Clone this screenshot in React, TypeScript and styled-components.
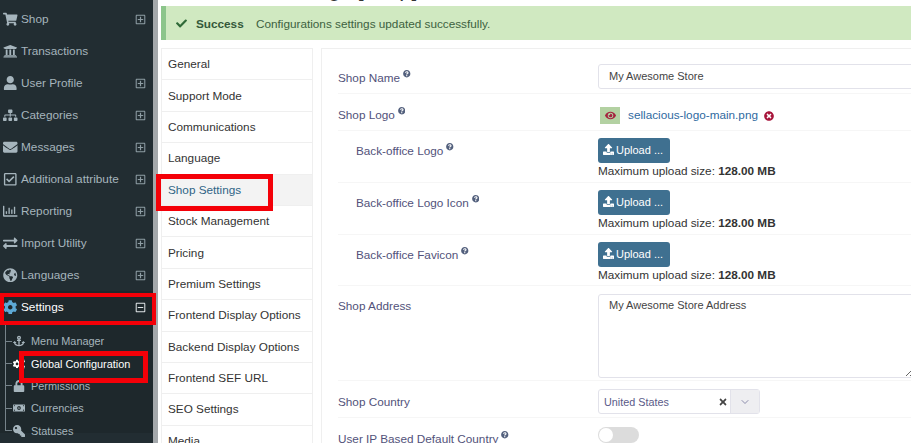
import styled, { createGlobalStyle } from 'styled-components';
import type { ComponentType, ReactNode } from 'react';
import { ChevronDown } from 'lucide-react';
import {
  FaAnchor,
  FaCheck,
  FaCog,
  FaCogs,
  FaEnvelope,
  FaExchangeAlt,
  FaEye,
  FaGlobeAmericas,
  FaKey,
  FaLock,
  FaMoneyBillAlt,
  FaQuestionCircle,
  FaRegChartBar,
  FaRegCheckSquare,
  FaRegMinusSquare,
  FaRegPlusSquare,
  FaShoppingCart,
  FaSitemap,
  FaTimes,
  FaTimesCircle,
  FaUniversity,
  FaUpload,
  FaUser,
} from 'react-icons/fa';

const Global = createGlobalStyle`
  html, body {
    margin: 0;
    height: 100%;
    overflow: hidden;
    background: #fff;
  }
  body {
    font-family: 'Liberation Sans', Arial, sans-serif;
    font-size: 11.75px;
    color: #333;
  }
`;

const Page = styled.div`
  display: flex;
  width: 911px;
  height: 443px;
  overflow: hidden;
  position: relative;
`;

const Sidebar = styled.nav`
  flex: 0 0 153px;
  height: 440px;
  background: #222d32;
  overflow: hidden;
  padding-top: 3px;
  border-right: 5px solid #a4a8ab;
`;

const NavItem = styled.div<{ $open?: boolean }>`
  display: flex;
  align-items: center;
  height: 32px;
  padding-left: 2px;
  color: ${p => (p.$open ? '#fff' : '#a6b5bd')};
  font-size: 11.8px;
  background: ${p => (p.$open ? '#1e282c' : 'transparent')};
`;

const NavIcon = styled.span<{ $accent?: boolean }>`
  flex: 0 0 19px;
  display: flex;
  justify-content: center;
  margin-left: -1px;
  margin-right: 1px;
  font-size: 14.5px;
  color: ${p => (p.$accent ? '#5da9d6' : '#a6b5bd')};
`;

const NavLabel = styled.span`
  flex: 1;
`;

const Toggle = styled.span<{ $open?: boolean }>`
  display: flex;
  margin-right: 7px;
  font-size: 11px;
  color: ${p => (p.$open ? '#dfe4e6' : '#8f9ea5')};
`;

const SubList = styled.div`
  position: relative;
  box-sizing: border-box;
  height: 110px;
  padding: 7px 0 0 5px;
  background: #1e282c;
  &::before {
    content: '';
    position: absolute;
    left: 5px;
    top: 0;
    bottom: 2px;
    width: 1px;
    background: #76838a;
  }
`;

const SubItem = styled.div<{ $active?: boolean }>`
  display: flex;
  align-items: center;
  height: 22.4px;
  font-size: 10.9px;
  color: ${p => (p.$active ? '#fff' : '#a6b5bd')};
  &::before {
    content: '';
    flex: 0 0 7px;
    height: 1px;
    background: #76838a;
  }
`;

const SubIcon = styled.span<{ $active?: boolean; $flip?: boolean }>`
  flex: 0 0 14px;
  display: flex;
  justify-content: center;
  margin-right: 5px;
  font-size: 12px;
  color: ${p => (p.$active ? '#fff' : '#a6b5bd')};
  transform: ${p => (p.$flip ? 'scaleX(-1)' : 'none')};
`;

const Content = styled.main`
  flex: 1;
  min-width: 0;
  padding-left: 3px;
`;

const PageTitle = styled.h1`
  margin: -23px 0 0;
  height: 29px;
  padding-left: 111px;
  font-size: 22px;
  font-weight: 400;
  line-height: 24px;
  color: #333;
  white-space: nowrap;
`;

const Alert = styled.div`
  display: flex;
  align-items: center;
  height: 34px;
  padding-left: 10px;
  background: #d0e9c1;
  border-left: 5px solid #8cc58b;
  color: #3c6140;
  box-sizing: border-box;
`;

const AlertIcon = styled.span`
  display: flex;
  width: 20px;
  font-size: 11px;
  color: #2f6a38;
`;

const AlertTitle = styled.strong`
  width: 60px;
  color: #34583a;
`;

const Columns = styled.div`
  display: flex;
  align-items: flex-start;
  margin-top: 8px;
  gap: 8px;
`;

const Tabs = styled.div`
  flex: 0 0 150px;
  border: 1px solid #efefef;
  border-bottom: 0;
`;

const Tab = styled.div<{ $active?: boolean }>`
  display: flex;
  align-items: center;
  height: 29.4px;
  padding: 0 0 1px 6px;
  border-bottom: 1px solid #efefef;
  white-space: nowrap;
  color: ${p => (p.$active ? '#2f6486' : '#333')};
  background: ${p => (p.$active ? '#f3f3f3' : '#fff')};
`;

const Panel = styled.section`
  flex: 1;
  min-width: 0;
  height: 400px;
  border: 1px solid #efefef;
  border-right: 0;
  padding-left: 16px;
`;

const Row = styled.div<{ $h: number }>`
  display: flex;
  height: ${p => p.$h}px;
  box-sizing: border-box;
  border-bottom: 1px solid #f6f6f6;
`;

const Label = styled.div<{ $nested?: boolean; $top: number }>`
  flex: 0 0 ${p => (p.$nested ? 242 : 260)}px;
  padding-left: ${p => (p.$nested ? 18 : 0)}px;
  padding-top: ${p => p.$top}px;
  color: #52527a;
  white-space: nowrap;
`;

const Help = styled.span`
  display: inline-flex;
  margin-left: 3px;
  vertical-align: 4px;
  font-size: 7.5px;
  color: #53607d;
`;

const Field = styled.div<{ $top: number }>`
  flex: 1;
  min-width: 0;
  padding-top: ${p => p.$top}px;
`;

const TextInput = styled.input`
  display: block;
  width: 330px;
  height: 25px;
  box-sizing: border-box;
  padding: 0 10px 2px;
  border: 1px solid #e2e2ea;
  border-radius: 3px;
  outline: none;
  font: 11px 'Liberation Sans', Arial, sans-serif;
  color: #444;
`;

const Logo = styled.div`
  display: flex;
  align-items: center;
  padding-left: 2px;
`;

const Thumb = styled.span`
  display: flex;
  align-items: center;
  justify-content: center;
  width: 20px;
  height: 17px;
  margin-right: 8px;
  background: #b3d1a2;
  color: #a5223f;
  font-size: 11px;
`;

const FileName = styled.a`
  padding-bottom: 2px;
  color: #2f6a9f;
`;

const Remove = styled.span`
  display: flex;
  margin-left: 6px;
  font-size: 10px;
  color: #a8163c;
`;

const UploadButton = styled.button`
  display: flex;
  align-items: center;
  gap: 2px;
  width: 72px;
  height: 25px;
  padding: 0 0 2px 5px;
  border: 0;
  border-radius: 3px;
  background: #3f7090;
  color: #fff;
  font: 400 11px 'Liberation Sans', Arial, sans-serif;
`;

const UploadHint = styled.div`
  margin-top: 1px;
  line-height: 14px;
  color: #333;
`;

const TextArea = styled.textarea`
  display: block;
  width: 317px;
  height: 84px;
  box-sizing: border-box;
  padding: 4px 10px;
  border: 1px solid #e2e2ea;
  border-radius: 3px;
  outline: none;
  resize: vertical;
  font: 11px 'Liberation Sans', Arial, sans-serif;
  color: #444;
`;

const SelectBox = styled.div`
  display: flex;
  align-items: center;
  width: 162px;
  height: 25px;
  box-sizing: border-box;
  border: 1px solid #e2e2ea;
  border-radius: 3px;
`;

const SelectValue = styled.span`
  flex: 1;
  padding-left: 5px;
  font-size: 10.8px;
  color: #5a5a88;
`;

const Clear = styled.span`
  display: flex;
  margin-right: 2px;
  font-size: 10px;
  color: #444;
`;

const Caret = styled.span`
  display: flex;
  align-items: center;
  justify-content: center;
  width: 28px;
  height: 100%;
  background: #eeeef1;
  border-left: 1px solid #e2e2ea;
  color: #6c6c94;
`;

const Switch = styled.span`
  display: flex;
  align-items: center;
  width: 41px;
  height: 16px;
  border-radius: 8px;
  background: #dcdcdc;
  &::before {
    content: '';
    width: 14px;
    height: 14px;
    margin-left: 1px;
    border-radius: 50%;
    background: #fff;
  }
`;

// red annotation boxes drawn over the screenshot
const Mark = styled.div<{ $x: number; $y: number; $w: number; $h: number; $t: number }>`
  position: absolute;
  left: ${p => p.$x}px;
  top: ${p => p.$y}px;
  width: ${p => p.$w}px;
  height: ${p => p.$h}px;
  box-sizing: border-box;
  border: ${p => p.$t}px solid #f40008;
  pointer-events: none;
`;

const navItems: { label: string; icon: ComponentType }[] = [
  { label: 'Shop', icon: FaShoppingCart },
  { label: 'Transactions', icon: FaUniversity },
  { label: 'User Profile', icon: FaUser },
  { label: 'Categories', icon: FaSitemap },
  { label: 'Messages', icon: FaEnvelope },
  { label: 'Additional attribute', icon: FaRegCheckSquare },
  { label: 'Reporting', icon: FaRegChartBar },
  { label: 'Import Utility', icon: FaExchangeAlt },
  { label: 'Languages', icon: FaGlobeAmericas },
];

const subItems: { label: string; icon: ComponentType; active?: boolean; flip?: boolean }[] = [
  { label: 'Menu Manager', icon: FaAnchor },
  { label: 'Global Configuration', icon: FaCogs, active: true },
  { label: 'Permissions', icon: FaLock },
  { label: 'Currencies', icon: FaMoneyBillAlt },
  { label: 'Statuses', icon: FaKey, flip: true },
];

const tabs = [
  'General',
  'Support Mode',
  'Communications',
  'Language',
  'Shop Settings',
  'Stock Management',
  'Pricing',
  'Premium Settings',
  'Frontend Display Options',
  'Backend Display Options',
  'Frontend SEF URL',
  'SEO Settings',
  'Media',
];

const FormRow = ({
  label,
  nested,
  help = true,
  h,
  labelTop = 13,
  top,
  children,
}: {
  label: string;
  nested?: boolean;
  help?: boolean;
  h: number;
  labelTop?: number;
  top: number;
  children?: ReactNode;
}) => (
  <Row $h={h}>
    <Label $nested={nested} $top={labelTop}>
      {label}
      {help && (
        <Help>
          <FaQuestionCircle />
        </Help>
      )}
    </Label>
    <Field $top={top}>{children}</Field>
  </Row>
);

const Upload = () => (
  <>
    <UploadButton>
      <FaUpload /> Upload ...
    </UploadButton>
    <UploadHint>
      Maximum upload size: <b>128.00 MB</b>
    </UploadHint>
  </>
);

export default function App() {
  return (
    <Page>
      <Global />
      <Sidebar>
        {navItems.map(({ label, icon: Icon }) => (
          <NavItem key={label}>
            <NavIcon>
              <Icon />
            </NavIcon>
            <NavLabel>{label}</NavLabel>
            {label !== 'Transactions' && (
              <Toggle>
                <FaRegPlusSquare />
              </Toggle>
            )}
          </NavItem>
        ))}
        <NavItem $open>
          <NavIcon $accent>
            <FaCog />
          </NavIcon>
          <NavLabel>Settings</NavLabel>
          <Toggle $open>
            <FaRegMinusSquare />
          </Toggle>
        </NavItem>
        <SubList>
          {subItems.map(({ label, icon: Icon, active, flip }) => (
            <SubItem key={label} $active={active}>
              <SubIcon $active={active} $flip={flip}>
                <Icon />
              </SubIcon>
              {label}
            </SubItem>
          ))}
        </SubList>
      </Sidebar>

      <Content>
        <PageTitle>Settings [shop]</PageTitle>
        <Alert>
          <AlertIcon>
            <FaCheck />
          </AlertIcon>
          <AlertTitle>Success</AlertTitle>
          Configurations settings updated successfully.
        </Alert>
        <Columns>
          <Tabs>
            {tabs.map(tab => (
              <Tab key={tab} $active={tab === 'Shop Settings'}>
                {tab}
              </Tab>
            ))}
          </Tabs>
          <Panel>
            <FormRow label="Shop Name" h={45} labelTop={21} top={15}>
              <TextInput readOnly defaultValue="My Awesome Store" />
            </FormRow>
            <FormRow label="Shop Logo" h={37} top={13}>
              <Logo>
                <Thumb>
                  <FaEye />
                </Thumb>
                <FileName>sellacious-logo-main.png</FileName>
                <Remove>
                  <FaTimesCircle />
                </Remove>
              </Logo>
            </FormRow>
            <FormRow label="Back-office Logo" nested h={52} labelTop={12} top={7}>
              <Upload />
            </FormRow>
            <FormRow label="Back-office Logo Icon" nested h={52} labelTop={12} top={7}>
              <Upload />
            </FormRow>
            <FormRow label="Back-office Favicon" nested h={51} labelTop={12} top={7}>
              <Upload />
            </FormRow>
            <FormRow label="Shop Address" help={false} h={95} top={8}>
              <TextArea readOnly defaultValue="My Awesome Store Address" />
            </FormRow>
            <FormRow label="Shop Country" help={false} h={37} labelTop={14} top={8}>
              <SelectBox>
                <SelectValue>United States</SelectValue>
                <Clear>
                  <FaTimes />
                </Clear>
                <Caret>
                  <ChevronDown size={12} strokeWidth={1.5} />
                </Caret>
              </SelectBox>
            </FormRow>
            <FormRow label="User IP Based Default Country" h={40} top={9}>
              <Switch />
            </FormRow>
          </Panel>
        </Columns>
      </Content>

      <Mark $x={0} $y={293} $w={156} $h={32} $t={4} />
      <Mark $x={19} $y={351} $w={129} $h={32} $t={5} />
      <Mark $x={156} $y={174} $w={117} $h={37} $t={5} />
    </Page>
  );
}
